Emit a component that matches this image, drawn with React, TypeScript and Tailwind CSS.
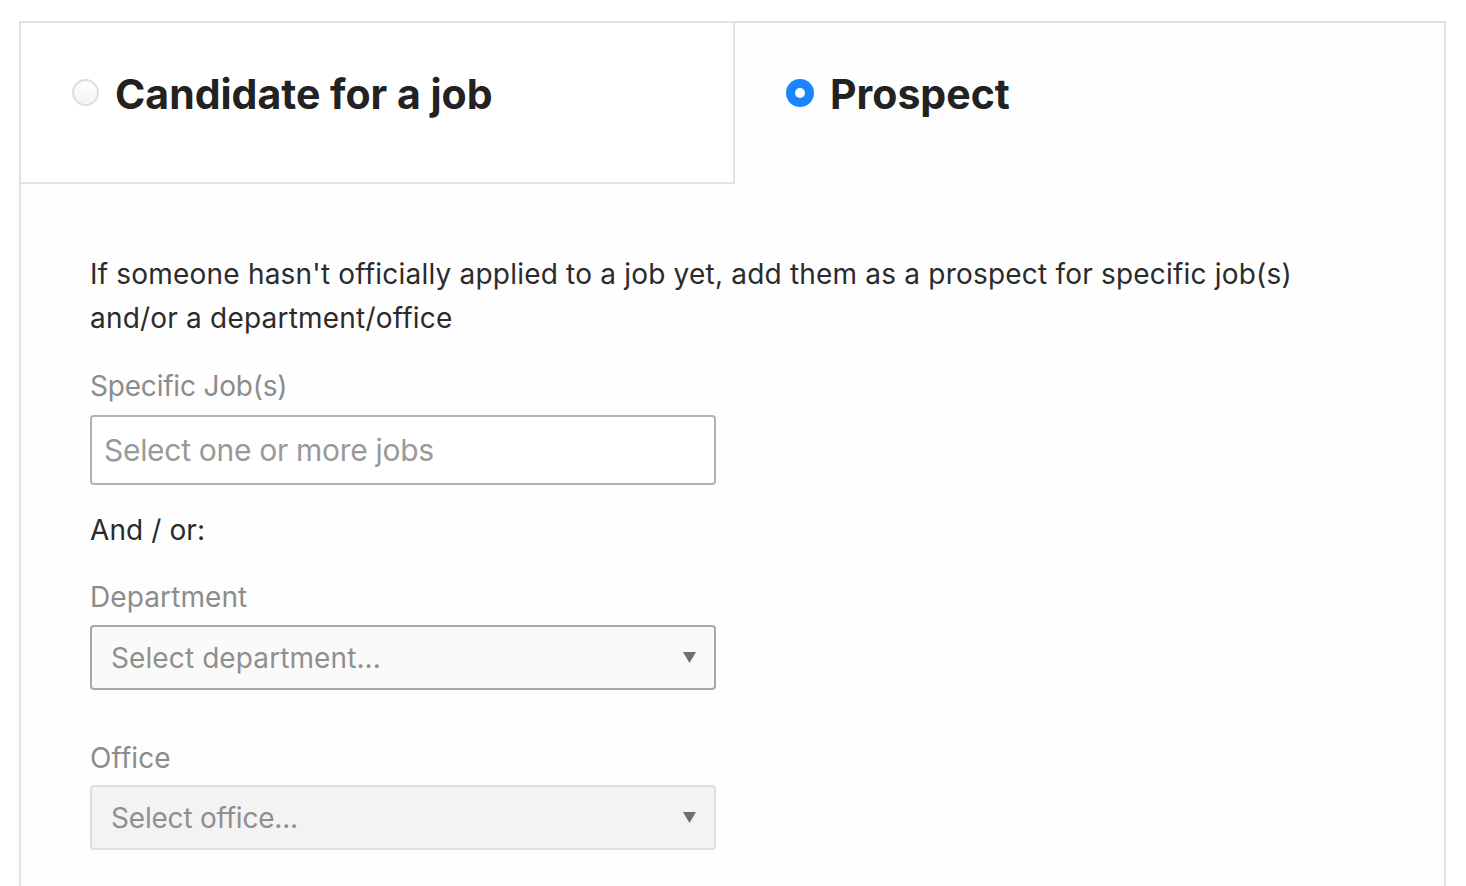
function Radio({ checked }: { checked: boolean }) {
  if (checked) {
    return (
      <span className="flex h-[28px] w-[28px] shrink-0 items-center justify-center rounded-full bg-[#1a85ff]">
        <span className="h-[10px] w-[10px] rounded-full bg-white" />
      </span>
    );
  }
  return (
    <span className="h-[27px] w-[27px] shrink-0 rounded-full border-2 border-[#dedede] bg-gradient-to-b from-white to-[#f4f4f4] shadow-[inset_0_1px_1px_rgba(0,0,0,0.04)]" />
  );
}

function Caret() {
  return (
    <svg width="15" height="13" viewBox="0 0 15 13" className="shrink-0">
      <path d="M1 1 H14 L7.5 12 Z" fill="#6f6f6f" />
    </svg>
  );
}

export default function App() {
  return (
    <div className="min-h-screen bg-white pt-[21px] pl-[19px] pr-[20px] font-['Inter',sans-serif]">
      <div className="h-[866px] border-2 border-b-0 border-[#e2e2e2] bg-[#fefefe]">
        <div className="flex">
          <div className="flex h-[161px] w-[714px] items-start gap-[16px] border-r-2 border-b-2 border-[#e2e2e2] bg-white pl-[51px] pt-[56px]">
            <Radio checked={false} />
            <span className="-mt-[5px] text-[41px] leading-[40px] font-bold text-[#222]">Candidate for a job</span>
          </div>
          <div className="flex h-[161px] flex-1 items-start gap-[16px] pl-[51px] pt-[56px]">
            <Radio checked />
            <span className="-mt-[5px] text-[41px] leading-[40px] font-bold text-[#222]">Prospect</span>
          </div>
        </div>

        <div className="pl-[69px] pt-[68px]">
          <p className="w-[1240px] text-[28px] leading-[44px] tracking-[0.2px] text-[#2b2b2b]">
            If someone hasn't officially applied to a job yet, add them as a prospect for specific job(s) and/or a
            department/office
          </p>

          <div className="mt-[26px] text-[28px] leading-[40px] tracking-[-0.2px] text-[#8c8c8c]">Specific Job(s)</div>
          <div className="mt-[9px] flex h-[70px] w-[626px] items-center rounded-[4px] border-2 border-[#b3b3b3] bg-white px-[12px]">
            <span className="text-[30px] tracking-[-0.3px] text-[#999]">Select one or more jobs</span>
          </div>

          <div className="mt-[25px] text-[28px] leading-[40px] tracking-[0.1px] text-[#2b2b2b]">And / or:</div>

          <div className="mt-[27px] text-[28px] leading-[40px] tracking-[0.1px] text-[#8c8c8c]">Department</div>
          <div className="mt-[8px] flex h-[65px] w-[626px] items-center justify-between rounded-[4px] border-2 border-[#a8a8a8] bg-[#fafafa] pl-[19px] pr-[17px]">
            <span className="text-[28px] tracking-[0.1px] text-[#8f8f8f]">Select department...</span>
            <Caret />
          </div>

          <div className="mt-[48px] text-[28px] leading-[40px] tracking-[0.1px] text-[#8c8c8c]">Office</div>
          <div className="mt-[7px] flex h-[65px] w-[626px] items-center justify-between rounded-[4px] border-2 border-[#dedede] bg-[#f3f3f3] pl-[19px] pr-[17px]">
            <span className="text-[28px] tracking-[-0.2px] text-[#8f8f8f]">Select office...</span>
            <Caret />
          </div>
        </div>
      </div>
    </div>
  );
}
